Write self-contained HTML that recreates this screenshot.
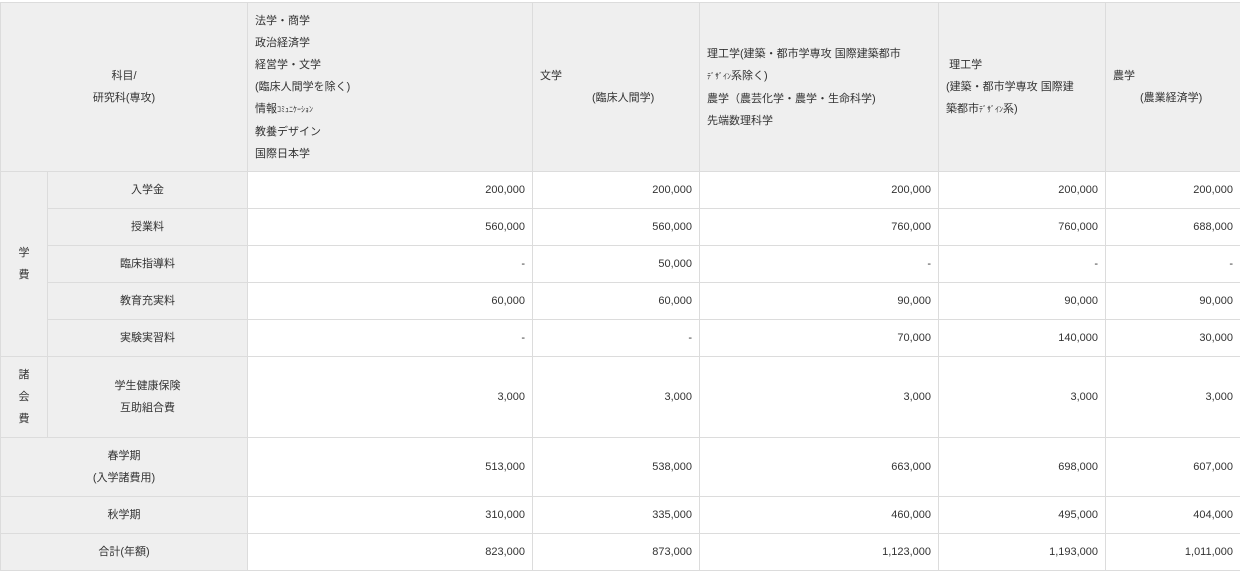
<!DOCTYPE html>
<html><head><meta charset="utf-8"><style>
html,body{margin:0;padding:0;background:#fff;width:1240px;height:572px;overflow:hidden}
table{position:absolute;left:0;top:2px;border-collapse:collapse;table-layout:fixed;width:1240px;font-family:"Liberation Sans","Noto Sans CJK JP",sans-serif;font-size:11px;color:#333}
td{border:1px solid #dcdcdc;padding:0 7px;line-height:22px}
.g{background:#efefef}
.c{text-align:center}
.r{text-align:right}
.s{font-size:8px}
tr.n td{height:36px}
</style></head><body>
<table>
<colgroup><col style="width:47px"><col style="width:200px"><col style="width:285px"><col style="width:167px"><col style="width:239px"><col style="width:167px"><col style="width:135px"></colgroup>
<tr style="height:169px">
<td class="g c" colspan="2">科目/<br>研究科(専攻)</td>
<td class="g">法学・商学<br>政治経済学<br>経営学・文学<br>(臨床人間学を除く)<br>情報<span class="s">ｺﾐｭﾆｹｰｼｮﾝ</span><br>教養デザイン<br>国際日本学</td>
<td class="g">文学<br><span style="padding-left:52px">(臨床人間学)</span></td>
<td class="g">理工学(建築・都市学専攻 国際建築都市<br><span class="s">ﾃﾞｻﾞｲﾝ</span>系除く)<br>農学（農芸化学・農学・生命科学)<br>先端数理科学</td>
<td class="g">&nbsp;理工学<br>(建築・都市学専攻 国際建<br>築都市<span class="s">ﾃﾞｻﾞｲﾝ</span>系)</td>
<td class="g">農学<br><span style="padding-left:27px">(農業経済学)</span></td>
</tr>
<tr class="n"><td class="g c" rowspan="5">学<br>費</td><td class="g c">入学金</td><td class="r">200,000</td><td class="r">200,000</td><td class="r">200,000</td><td class="r">200,000</td><td class="r">200,000</td></tr>
<tr class="n"><td class="g c">授業料</td><td class="r">560,000</td><td class="r">560,000</td><td class="r">760,000</td><td class="r">760,000</td><td class="r">688,000</td></tr>
<tr class="n"><td class="g c">臨床指導料</td><td class="r">-</td><td class="r">50,000</td><td class="r">-</td><td class="r">-</td><td class="r">-</td></tr>
<tr class="n"><td class="g c">教育充実料</td><td class="r">60,000</td><td class="r">60,000</td><td class="r">90,000</td><td class="r">90,000</td><td class="r">90,000</td></tr>
<tr class="n"><td class="g c">実験実習料</td><td class="r">-</td><td class="r">-</td><td class="r">70,000</td><td class="r">140,000</td><td class="r">30,000</td></tr>
<tr style="height:81px"><td class="g c">諸<br>会<br>費</td><td class="g c">学生健康保険<br>互助組合費</td><td class="r">3,000</td><td class="r">3,000</td><td class="r">3,000</td><td class="r">3,000</td><td class="r">3,000</td></tr>
<tr style="height:59px"><td class="g c" colspan="2">春学期<br>(入学諸費用)</td><td class="r">513,000</td><td class="r">538,000</td><td class="r">663,000</td><td class="r">698,000</td><td class="r">607,000</td></tr>
<tr class="n"><td class="g c" colspan="2">秋学期</td><td class="r">310,000</td><td class="r">335,000</td><td class="r">460,000</td><td class="r">495,000</td><td class="r">404,000</td></tr>
<tr class="n"><td class="g c" colspan="2">合計(年額)</td><td class="r">823,000</td><td class="r">873,000</td><td class="r">1,123,000</td><td class="r">1,193,000</td><td class="r">1,011,000</td></tr>
</table>
</body></html>
